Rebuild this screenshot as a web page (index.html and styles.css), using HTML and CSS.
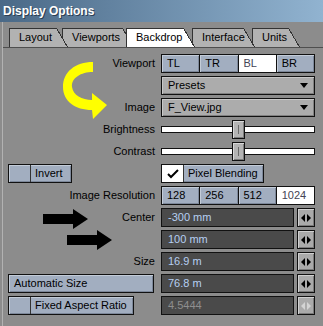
FILE: index.html
```html
<!DOCTYPE html>
<html lang="en">
<head>
  <meta charset="UTF-8">
  <title>Display Options</title>
  <link rel="stylesheet" href="styles.css">
</head>
<body>

<div class="window">
  <div class="titlebar">Display Options</div>

  <div class="frame">
    <div class="tabs">
      <div class="tab t1">Layout</div>
      <div class="tab t2">Viewports</div>
      <div class="tab t3 active">Backdrop</div>
      <div class="tab t4">Interface</div>
      <div class="tab t5">Units</div>
    </div>

    <div class="panel">
      <div class="row">
        <div class="label">Viewport</div>
        <div class="ctrl seg">
          <div class="seg-item">TL</div>
          <div class="seg-item">TR</div>
          <div class="seg-item on">BL</div>
          <div class="seg-item">BR</div>
        </div>
      </div>

      <div class="row">
        <div class="label"></div>
        <div class="ctrl drop">Presets<span class="tri"></span></div>
      </div>

      <div class="row">
        <div class="label">Image</div>
        <div class="ctrl drop">F_View.jpg<span class="tri"></span></div>
      </div>

      <div class="row">
        <div class="label">Brightness</div>
        <div class="ctrl slider"><div class="track"></div><div class="thumb"></div></div>
      </div>

      <div class="row">
        <div class="label">Contrast</div>
        <div class="ctrl slider"><div class="track"></div><div class="thumb"></div></div>
      </div>

      <div class="row">
        <div class="label left">
          <div class="btn toggle w-invert"><span class="box"></span><span class="txt">Invert</span></div>
        </div>
        <div class="btn toggle w-blend">
          <span class="box checked">
            <svg width="12" height="10" viewBox="0 0 12 10"><path d="M1 5 L4 8 L11 1" fill="none" stroke="#000" stroke-width="2"/></svg>
          </span>
          <span class="txt">Pixel Blending</span>
        </div>
      </div>

      <div class="row">
        <div class="label">Image Resolution</div>
        <div class="ctrl seg">
          <div class="seg-item">128</div>
          <div class="seg-item">256</div>
          <div class="seg-item">512</div>
          <div class="seg-item on">1024</div>
        </div>
      </div>

      <div class="row">
        <div class="label">Center</div>
        <div class="ctrl num">
          <div class="field">-300 mm</div>
          <div class="spin"><svg width="10" height="8" viewBox="0 0 10 8"><path d="M0 4 L4 0 L4 8 Z M6 0 L10 4 L6 8 Z" fill="#000"/></svg></div>
        </div>
      </div>

      <div class="row">
        <div class="label"></div>
        <div class="ctrl num">
          <div class="field">100 mm</div>
          <div class="spin"><svg width="10" height="8" viewBox="0 0 10 8"><path d="M0 4 L4 0 L4 8 Z M6 0 L10 4 L6 8 Z" fill="#000"/></svg></div>
        </div>
      </div>

      <div class="row">
        <div class="label">Size</div>
        <div class="ctrl num">
          <div class="field">16.9 m</div>
          <div class="spin"><svg width="10" height="8" viewBox="0 0 10 8"><path d="M0 4 L4 0 L4 8 Z M6 0 L10 4 L6 8 Z" fill="#000"/></svg></div>
        </div>
      </div>

      <div class="row">
        <div class="label left">
          <div class="btn plain w-auto">Automatic Size</div>
        </div>
        <div class="ctrl num">
          <div class="field">76.8 m</div>
          <div class="spin"><svg width="10" height="8" viewBox="0 0 10 8"><path d="M0 4 L4 0 L4 8 Z M6 0 L10 4 L6 8 Z" fill="#000"/></svg></div>
        </div>
      </div>

      <div class="row">
        <div class="label left">
          <div class="btn toggle w-fixed"><span class="box"></span><span class="txt">Fixed Aspect Ratio</span></div>
        </div>
        <div class="ctrl num disabled">
          <div class="field">4.5444</div>
          <div class="spin"><svg width="10" height="8" viewBox="0 0 10 8"><path d="M0 4 L4 0 L4 8 Z M6 0 L10 4 L6 8 Z" fill="#d4d4d4"/></svg></div>
        </div>
      </div>
    </div>
  </div>

  <!-- annotations drawn over the panel -->
  <svg class="note yellow" width="50" height="64" viewBox="0 0 50 64">
    <path d="M33 4 C15 4 3 14 3 29 C3 43 15 52 32 52 L33 61 L47 47 L32 35 L32 42 C22 42 13 37 12 29 C11 20 21 14 33 14 Z" fill="#ffff00"/>
  </svg>
  <svg class="note arrow1" width="46" height="21" viewBox="0 0 46 21">
    <path d="M0 5 L30 5 L30 0 L45 10 L30 20 L30 15 L0 15 Z" fill="#000"/>
  </svg>
  <svg class="note arrow2" width="46" height="21" viewBox="0 0 46 21">
    <path d="M0 5 L30 5 L30 0 L45 10 L30 20 L30 15 L0 15 Z" fill="#000"/>
  </svg>
</div>

</body>
</html>
```

FILE: styles.css
```css
* {
  box-sizing: border-box;
}

body {
  margin: 0;
  font-family: "Liberation Sans", Arial, sans-serif;
  font-size: 11px;
  color: #000;
  background: #8c8c8c;
}

.window {
  position: relative;
  width: 323px;
  height: 326px;
  background: #8c8c8c;
  overflow: hidden;
}

.titlebar {
  height: 22px;
  padding-left: 3px;
  line-height: 22px;
  font-size: 12px;
  font-weight: bold;
  color: #fff;
  text-shadow: 1px 1px 0 #2c3e52;
  background: linear-gradient(to right, #4a6987, #91b3d0);
}

.frame {
  margin-left: 2px;
  height: 304px;
  border-left: 1px solid #b2b2b2;
}

/* tabs */
.tabs {
  display: flex;
  align-items: flex-end;
  height: 25px;
  padding-left: 6px;
}

.tab {
  position: relative;
  height: 19px;
  line-height: 18px;
  padding-left: 9px;
  border-left: 1px solid #333;
  --tc: #b2b2b2;
  background:
    linear-gradient(#333, #333) left top / calc(100% - 11px) 1px no-repeat,
    linear-gradient(to top right, var(--tc) calc(50% - 1px), #333 calc(50% - 1px), #333 50%, transparent 50%) right top / 11px 100% no-repeat,
    linear-gradient(var(--tc), var(--tc)) left top / calc(100% - 11px) 100% no-repeat;
}

.tab.active {
  --tc: #fff;
}

.t1 { width: 59px; z-index: 5; }
.t2 { width: 72px; margin-left: -6px; z-index: 4; }
.t3 { width: 69px; margin-left: -8px; z-index: 6; }
.t4 { width: 63px; margin-left: -3px; z-index: 2; }
.t5 { width: 48px; margin-left: -3px; z-index: 1; }

/* panel rows */
.panel {
  border-top: 1px solid #4e4e4e;
  padding: 6px 0 0 5px;
}

.row {
  display: flex;
  height: 19px;
  margin-bottom: 3px;
}

.label {
  width: 147px;
  margin-right: 6px;
  line-height: 19px;
  text-align: right;
  white-space: nowrap;
}

.label.left {
  display: flex;
}

.ctrl {
  width: 154px;
  height: 19px;
}

/* segmented buttons */
.seg {
  display: flex;
  border: 1px solid #111;
}

.seg-item {
  flex: 1;
  padding-left: 5px;
  line-height: 17px;
  background: #a2aec0;
  border-right: 1px solid #111;
  box-shadow: inset 1px 1px 0 #c3ccd8, inset -1px -1px 0 #7d889a;
}

.seg-item:last-child {
  border-right: none;
}

.seg-item.on {
  background: #fff;
  color: #445;
  box-shadow: none;
}

/* dropdowns */
.drop {
  position: relative;
  padding-left: 6px;
  line-height: 17px;
  background: #acacac;
  border: 1px solid #111;
  box-shadow: inset 1px 1px 0 #c8c8c8, inset -1px -1px 0 #808080;
}

.tri {
  position: absolute;
  right: 6px;
  top: 6px;
  border-left: 4px solid transparent;
  border-right: 4px solid transparent;
  border-top: 5px solid #000;
}

/* sliders */
.slider {
  position: relative;
  display: flex;
  align-items: center;
}

.track {
  width: 100%;
  height: 7px;
  background: #fff;
  border: 1px solid #111;
}

.thumb {
  position: absolute;
  left: 71px;
  top: 0;
  width: 13px;
  height: 19px;
  background: #b4b4b4;
  border: 1px solid #111;
  box-shadow: inset 1px 1px 0 #d8d8d8, inset -1px -1px 0 #7c7c7c;
}

.thumb::after {
  content: "";
  position: absolute;
  left: 5px;
  top: 4px;
  width: 1px;
  height: 9px;
  background: #6a6a6a;
}

/* buttons */
.btn {
  display: flex;
  height: 19px;
  line-height: 17px;
  background: #a2aec0;
  border: 1px solid #111;
  box-shadow: inset 1px 1px 0 #c3ccd8, inset -1px -1px 0 #7d889a;
}

.btn.plain {
  padding-left: 5px;
}

.toggle .box {
  width: 22px;
  border-right: 1px solid #333;
}

.toggle .box.checked {
  display: flex;
  align-items: center;
  justify-content: center;
  background: #fff;
}

.toggle .txt {
  padding-left: 4px;
}

.w-invert { width: 64px; }
.w-blend { width: 103px; }
.w-auto { width: 146px; }
.w-fixed { width: 126px; }

/* numeric fields */
.num {
  display: flex;
  gap: 3px;
}

.field {
  flex: 1;
  padding-left: 6px;
  line-height: 17px;
  color: #b6cff2;
  background: #4a4a4a;
  border: 1px solid #111;
}

.spin {
  width: 18px;
  display: flex;
  align-items: center;
  justify-content: center;
  background: #aaaaaa;
  border: 1px solid #111;
  box-shadow: inset 1px 1px 0 #d0d0d0, inset -1px -1px 0 #7a7a7a;
}

.disabled .field {
  color: #8e8e8e;
}

/* annotations */
.note {
  position: absolute;
}

.yellow {
  left: 60px;
  top: 58px;
}

.arrow1 {
  left: 43px;
  top: 209px;
}

.arrow2 {
  left: 67px;
  top: 230px;
}
```
